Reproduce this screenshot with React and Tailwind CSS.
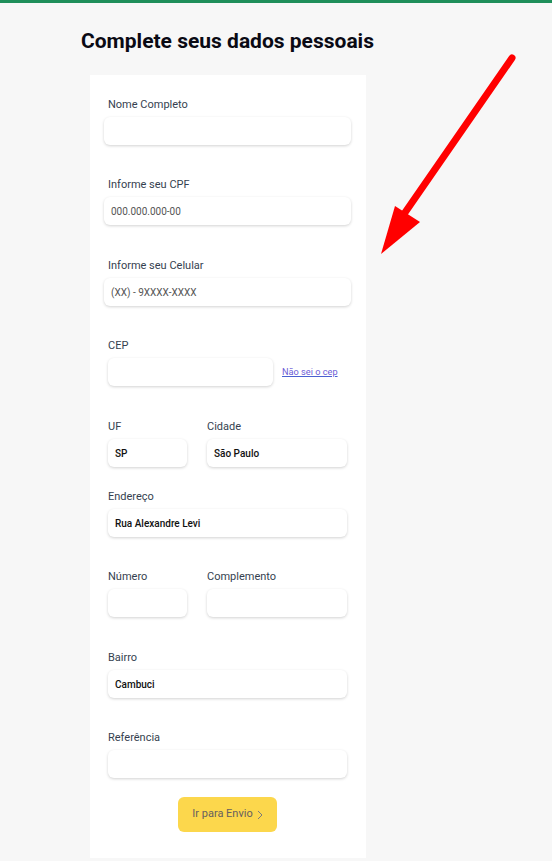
import React from "react";

const font = { fontFamily: "Roboto, 'Noto Sans', Arial, sans-serif" };

function Label({ children }) {
  return <div className="text-[11px] leading-[13px] text-[#353f4f]">{children}</div>;
}

function Input({ value, placeholder, className = "" }) {
  return (
    <div
      className={`mt-[6px] h-[28px] rounded-[6px] bg-white shadow-[0_1px_3px_rgba(0,0,0,0.18)] flex items-center pl-[7px] text-[10px] ${className}`}
    >
      {value ? (
        <span className="font-medium text-[#111]">{value}</span>
      ) : placeholder ? (
        <span className="text-[#555]">{placeholder}</span>
      ) : null}
    </div>
  );
}

export default function App() {
  return (
    <div className="relative min-h-screen bg-[#f7f7f7]" style={font}>
      <div className="h-[3px] bg-[#1f8f5a]" />
      <h1 className="ml-[81px] mt-[24px] text-[21px] leading-[28px] font-bold text-[#0a0a14]">
        Complete seus dados pessoais
      </h1>
      <div className="ml-[90px] mt-[20px] w-[276px] bg-white pl-[18px] pr-[19px] pt-[23px] pb-[26px]">
        <Label>Nome Completo</Label>
        <Input className="-ml-[4px] -mr-[4px]" />

        <div className="mt-[33px]">
          <Label>Informe seu CPF</Label>
          <Input className="-ml-[4px] -mr-[4px]" placeholder="000.000.000-00" />
        </div>

        <div className="mt-[34px]">
          <Label>Informe seu Celular</Label>
          <Input className="-ml-[4px] -mr-[4px]" placeholder="(XX) - 9XXXX-XXXX" />
        </div>

        <div className="mt-[33px]">
          <Label>CEP</Label>
          <div className="flex items-center">
            <Input className="w-[165px]" />
            <a
              href="#"
              className="ml-[9px] mt-[6px] text-[9.2px] text-[#6c5cd6] underline decoration-[#4a5fd0]"
            >
              Não sei o cep
            </a>
          </div>
        </div>

        <div className="mt-[34px] flex gap-[20px]">
          <div className="w-[79px]">
            <Label>UF</Label>
            <Input value="SP" />
          </div>
          <div className="flex-1">
            <Label>Cidade</Label>
            <Input value="São Paulo" />
          </div>
        </div>

        <div className="mt-[23px]">
          <Label>Endereço</Label>
          <Input value="Rua Alexandre Levi" />
        </div>

        <div className="mt-[33px] flex gap-[20px]">
          <div className="w-[79px]">
            <Label>Número</Label>
            <Input />
          </div>
          <div className="flex-1">
            <Label>Complemento</Label>
            <Input />
          </div>
        </div>

        <div className="mt-[34px]">
          <Label>Bairro</Label>
          <Input value="Cambuci" />
        </div>

        <div className="mt-[33px]">
          <Label>Referência</Label>
          <Input />
        </div>

        <div className="mt-[19px] flex justify-center">
          <button className="h-[35px] w-[99px] rounded-[6px] bg-[#fcd74c] text-[11px] text-[#675f5f] flex items-center justify-center gap-[4px]">
            <span>Ir para Envio</span>
            <svg width="6" height="10" viewBox="0 0 6 10" fill="none">
              <path d="M1 1l4 4-4 4" stroke="#7a7a7a" strokeWidth="1" />
            </svg>
          </button>
        </div>
      </div>

      <svg
        className="absolute left-0 top-0 pointer-events-none"
        width="552"
        height="300"
        viewBox="0 0 552 300"
      >
        <line x1="512" y1="58" x2="404" y2="214" stroke="#ff0000" strokeWidth="7" strokeLinecap="round" />
        <polygon points="395,206 420,222 381,254" fill="#ff0000" />
      </svg>
    </div>
  );
}
